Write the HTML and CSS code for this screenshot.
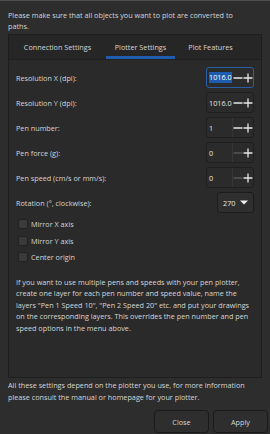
FILE: index.html
```html
<!DOCTYPE html>
<html lang="en">
<head>
    <meta charset="UTF-8">
    <title>Plotter</title>
    <link rel="stylesheet" href="styles.css">
</head>
<body>
    <div class="dlg">
        <p class="intro-txt">Please make sure that all objects you want to plot are converted to<br />paths.</p>

        <div class="tab-ctr">
            <div class="tab-bar">
                <div class="tab tab-conn">Connection Settings</div>
                <div class="tab tab-plot active">Plotter Settings</div>
                <div class="tab tab-feat">Plot Features</div>
            </div>
            <div class="tab-page">
                <div class="opt-row">
                    <span>Resolution X (dpi):</span>
                    <div class="spin focus">
                        <span class="spin-val"><span class="sel">1016.0</span></span>
                        <span class="spin-btns">
                            <svg width="20" height="10" viewBox="0 0 20 10"><path d="M0.5 5H9.5M10.5 5H19.5M15 0.5V9.5" stroke="#e6e6e6" stroke-width="1.3" fill="none"/></svg>
                        </span>
                    </div>
                </div>
                <div class="opt-row">
                    <span>Resolution Y (dpi):</span>
                    <div class="spin">
                        <span class="spin-val">1016.0</span>
                        <span class="spin-btns">
                            <svg width="20" height="10" viewBox="0 0 20 10"><path d="M0.5 5H9.5M10.5 5H19.5M15 0.5V9.5" stroke="#e6e6e6" stroke-width="1.3" fill="none"/></svg>
                        </span>
                    </div>
                </div>
                <div class="opt-row">
                    <span>Pen number:</span>
                    <div class="spin">
                        <span class="spin-val">1</span>
                        <span class="spin-btns split">
                            <svg width="20" height="10" viewBox="0 0 20 10"><path d="M0.5 5H9.5M10.5 5H19.5M15 0.5V9.5" stroke="#e6e6e6" stroke-width="1.3" fill="none"/></svg>
                        </span>
                    </div>
                </div>
                <div class="opt-row">
                    <span>Pen force (g):</span>
                    <div class="spin">
                        <span class="spin-val">0</span>
                        <span class="spin-btns split">
                            <svg width="20" height="10" viewBox="0 0 20 10"><path d="M0.5 5H9.5" stroke="#5a5a5a" stroke-width="1.3" fill="none"/><path d="M10.5 5H19.5M15 0.5V9.5" stroke="#e6e6e6" stroke-width="1.3" fill="none"/></svg>
                        </span>
                    </div>
                </div>
                <div class="opt-row">
                    <span>Pen speed (cm/s or mm/s):</span>
                    <div class="spin">
                        <span class="spin-val">0</span>
                        <span class="spin-btns split">
                            <svg width="20" height="10" viewBox="0 0 20 10"><path d="M0.5 5H9.5" stroke="#5a5a5a" stroke-width="1.3" fill="none"/><path d="M10.5 5H19.5M15 0.5V9.5" stroke="#e6e6e6" stroke-width="1.3" fill="none"/></svg>
                        </span>
                    </div>
                </div>
                <div class="opt-row">
                    <span>Rotation (°, clockwise):</span>
                    <div class="combo">
                        <span>270</span>
                        <svg width="8" height="5" viewBox="0 0 8 5"><path d="M0 0.5H8L4 4.5Z" fill="#f0f0f0"/></svg>
                    </div>
                </div>

                <div class="chk-list">
                    <label class="chk-row"><span class="chk-box"></span>Mirror X axis</label>
                    <label class="chk-row"><span class="chk-box"></span>Mirror Y axis</label>
                    <label class="chk-row"><span class="chk-box"></span>Center origin</label>
                </div>

                <p class="help-txt">If you want to use multiple pens and speeds with your pen plotter,<br />create one layer for each pen number and speed value, name the<br />layers "Pen 1 Speed 10", "Pen 2 Speed 20" etc. and put your drawings<br />on the corresponding layers. This overrides the pen number and pen<br />speed options in the menu above.</p>
            </div>
        </div>

        <p class="foot-txt">All these settings depend on the plotter you use, for more information<br />please consult the manual or homepage for your plotter.</p>

        <div class="btn-bar">
            <button class="dlg-btn">Close</button>
            <button class="dlg-btn">Apply</button>
        </div>
    </div>
</body>
</html>
```

FILE: styles.css
```css
*, *:before, *:after {
    margin: 0;
    padding: 0;
    box-sizing: border-box;
}
html, body {
    width: 270px;
    height: 434px;
    overflow: hidden;
}
body {
    background: #2d2d2d;
    color: #d6d6d6;
    font-family: 'Open Sans', 'Noto Sans', sans-serif;
    font-size: 7.25px;
}
.dlg {
    height: 434px;
    border-top: 1px solid #4e4e4e;
    display: flex;
    flex-direction: column;
}
.intro-txt {
    padding: 9px 8px 0;
    line-height: 11px;
    white-space: nowrap;
}
.tab-ctr {
    margin: 2px 8px 0;
    height: 344px;
    border: 1px solid #1e1e1e;
    background: #2a2a2a;
    display: flex;
    flex-direction: column;
}
.tab-bar {
    display: flex;
    height: 25px;
    background: #262626;
    border-bottom: 1px solid #1f1f1f;
}
.tab {
    display: flex;
    align-items: center;
    justify-content: center;
    height: 24px;
    white-space: nowrap;
}
.tab-conn {
    width: 97px;
}
.tab-plot {
    width: 69px;
}
.tab-feat {
    width: 71px;
}
.tab.active {
    box-shadow: inset 0 -3px 0 #1d5cae;
}
.tab-page {
    flex: 1;
    padding: 7px 7px 0;
}
.opt-row {
    display: flex;
    align-items: center;
    justify-content: space-between;
    height: 21px;
    margin-bottom: 4px;
}
.spin {
    display: flex;
    width: 48px;
    height: 21px;
    border: 1px solid #1e1e1e;
    border-radius: 3px;
    background: #2b2b2b;
}
.spin.focus {
    border-color: #2a5fa8;
}
.spin-val {
    width: 25px;
    display: flex;
    align-items: center;
    padding-left: 2px;
    white-space: nowrap;
    color: #e4e4e4;
}
.sel {
    background: #1d5cae;
    color: #ffffff;
    line-height: 11px;
}
.spin-btns {
    flex: 1;
    display: flex;
    align-items: center;
    padding-left: 1px;
}
.spin-btns.split {
    border-left: 1px solid #363636;
    padding-left: 0;
}
.combo {
    display: flex;
    align-items: center;
    gap: 5px;
    width: 37px;
    height: 21px;
    padding-left: 5px;
    border: 1px solid #1c1c1c;
    border-radius: 3px;
    background: #2f2f2f;
    color: #e4e4e4;
}
.chk-list {
    margin-top: -1px;
}
.chk-row {
    display: flex;
    align-items: center;
    height: 16.5px;
    padding-left: 2px;
}
.chk-box {
    width: 10px;
    height: 10px;
    margin-right: 3px;
    border: 1px solid #202020;
    border-radius: 2px;
    background: #3a3a3a;
}
.help-txt {
    margin-top: 11px;
    line-height: 11.6px;
    white-space: nowrap;
}
.foot-txt {
    margin-top: 2px;
    padding: 0 8px;
    line-height: 11.7px;
    white-space: nowrap;
}
.btn-bar {
    display: flex;
    justify-content: flex-end;
    gap: 4px;
    margin-top: 7px;
    padding-right: 2px;
}
.dlg-btn {
    width: 55px;
    height: 23px;
    background: #2e2e2e;
    border: 1px solid #1a1a1a;
    border-radius: 4px;
    color: #d6d6d6;
    font-family: 'Open Sans', 'Noto Sans', sans-serif;
    font-size: 7.25px;
}
```
